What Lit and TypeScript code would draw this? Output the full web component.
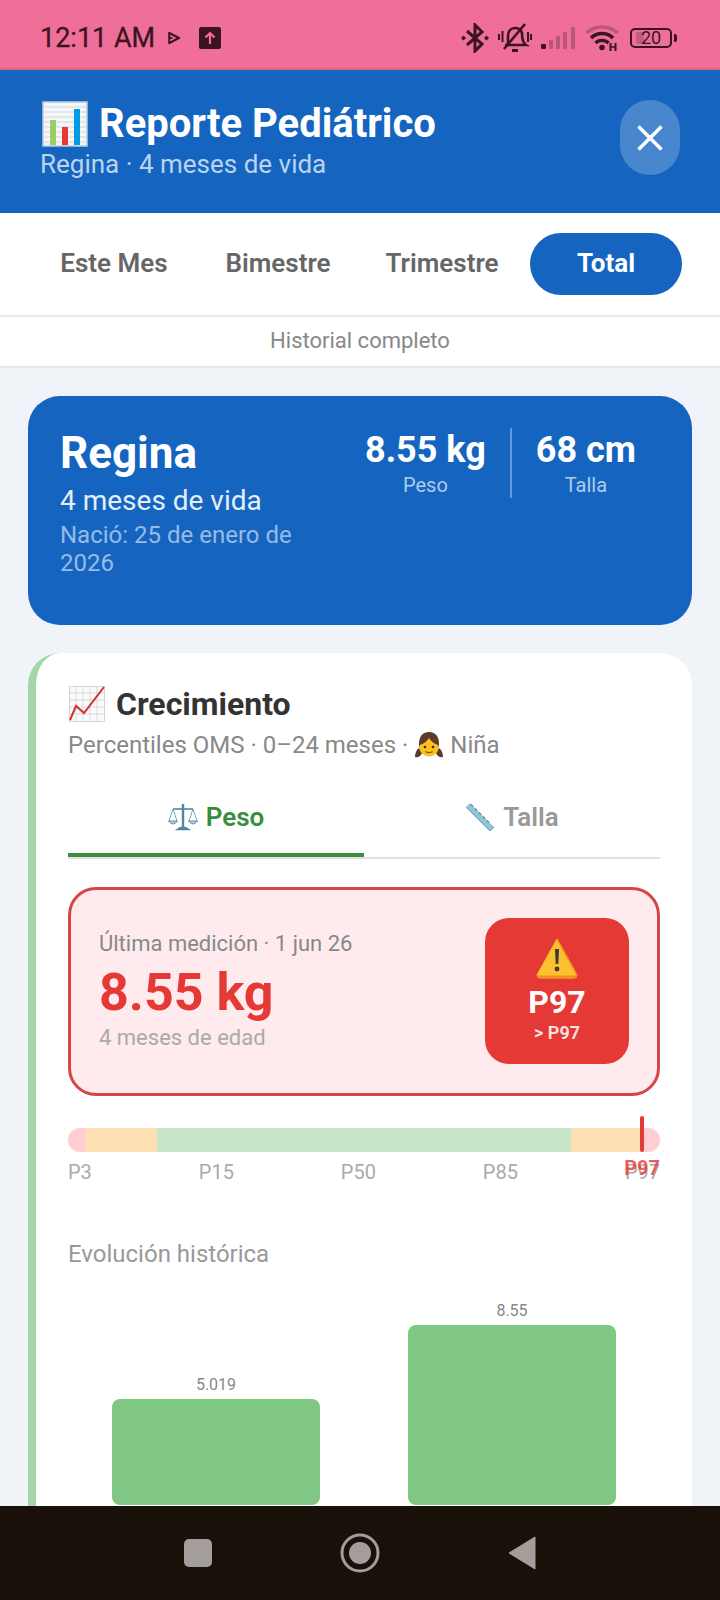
import { LitElement, html, css, svg } from 'lit';
import { customElement, state } from 'lit/decorators.js';

// Emoji have no installed font here, so they are drawn by hand
const barChart = html`<svg width="46" height="46" viewBox="0 0 46 46">
  <rect x="1" y="1" width="44" height="44" fill="#f4f6f8" stroke="#b8cbdc" stroke-width="1.5" />
  ${[6, 11, 16, 21, 26, 31, 36, 41].map(
    y => svg`<line x1="2" x2="44" y1=${y} y2=${y} stroke="#cfd6dc" stroke-width="1" />`,
  )}
  <rect x="8" y="19" width="6" height="25" fill="#9ccc65" />
  <rect x="20" y="26" width="6" height="18" fill="#e53935" />
  <rect x="32" y="8" width="6" height="36" fill="#039be5" />
</svg>`;

const chartUp = html`<svg width="36" height="36" viewBox="0 0 36 36">
  <rect x="0.5" y="0.5" width="35" height="35" fill="#fafafa" stroke="#d5d9dc" />
  ${[7, 14, 21, 28].map(
    v => svg`<path d="M${v} 0V36M0 ${v}H36" stroke="#d5d9dc" stroke-width="1" />`,
  )}
  <path d="M1 34L7 20L15 27L35 1" fill="none" stroke="#d32f2f" stroke-width="2" />
</svg>`;

const scales = html`<svg width="30" height="28" viewBox="0 0 30 28">
  <path d="M15 1V24" stroke="#4f87a3" stroke-width="2.4" />
  <path d="M9 26.5Q15 22 21 26.5Z" fill="#4f87a3" stroke="#4f87a3" stroke-width="1.5" />
  <path d="M5 6H25" stroke="#4f87a3" stroke-width="1.6" />
  <path d="M5 6L1 18M5 6L9 18M25 6L21 18M25 6L29 18" stroke="#6d9db5" stroke-width="0.9" fill="none" />
  <path d="M0.5 18H9.5Q5 24 0.5 18ZM20.5 18H29.5Q25 24 20.5 18Z" fill="#b9d3e0" stroke="#4f87a3" stroke-width="0.9" />
</svg>`;

const ruler = html`<svg width="30" height="30" viewBox="0 0 30 30">
  <path d="M5 1L29 25L25 29L1 5Z" fill="#90c4d6" />
  <path d="M1 5L25 29L29 25" fill="none" stroke="#5f9fb5" stroke-width="1" />
  <path d="M6 2.500L8 4.500M10 6.500L12 8.500M14 10.500L16 12.500M18 14.500L20 16.500M22 18.500L24 20.500" stroke="#5d8c9e" stroke-width="1.400" />
</svg>`;

const girl = html`<svg width="30" height="28" viewBox="0 0 30 28">
  <path d="M15 1C8 1 5 6 5 13C5 19 9 21 15 21C21 21 25 19 25 13C25 6 22 1 15 1Z" fill="#5d3a2e" />
  <path d="M5 17C2 19 1 23 1 26C4 27 7 25 8 22ZM25 17C28 19 29 23 29 26C26 27 23 25 22 22Z" fill="#5d3a2e" />
  <circle cx="15" cy="16" r="9.500" fill="#fcc21b" />
  <path d="M5.500 14C10 13 13 10 15 7C17 10 20 13 24.500 14C24 6 20 3 15 3C10 3 6 6 5.500 14Z" fill="#5d3a2e" />
  <circle cx="11" cy="16" r="1.300" fill="#3e2723" />
  <circle cx="19" cy="16" r="1.300" fill="#3e2723" />
  <path d="M11.500 20.500Q15 23 18.500 20.500" stroke="#8a4b25" stroke-width="1.200" fill="none" />
</svg>`;

const warning = html`<svg width="42" height="42" viewBox="0 0 42 42">
  <path d="M21 2L41 38Q41 41 38 41H4Q1 41 1 38Z" fill="#fdc02f" stroke="#fdc02f" stroke-linejoin="round" />
  <path d="M1 38Q1 41 4 41H38Q41 41 41 38Q41 39 38 39H4Q1 39 1 38Z" fill="#f19020" stroke="#f19020" />
  <path d="M21 2L41 38" stroke="#f19020" stroke-width="1.500" />
  <path d="M19 12H23L22.300 27H19.700Z" fill="#3a3a3a" />
  <circle cx="21" cy="32" r="2.400" fill="#3a3a3a" />
</svg>`;

const statusIcons = html`
  <svg width="28" height="30" viewBox="0 0 28 30" fill="none" stroke="#3b1424" stroke-width="3">
    <path d="M6 8L21 21L14 28V2L21 9L6 22" />
    <path d="M2.500 12.500L5 15L2.500 17.500L0 15ZM25.500 12.500L28 15L25.500 17.500L23 15Z" fill="#3b1424" stroke="none" />
  </svg>
  <svg width="34" height="30" viewBox="0 0 34 30" fill="none" stroke="#3b1424" stroke-width="2.600">
    <path d="M10 22V13C10 8 13 5 17 5C21 5 23 7 24 10C24 15 25 20 28 22H7" />
    <path d="M14 27.500H20" stroke-width="3" />
    <path d="M6 26L27 1" />
    <path d="M1 11V17M4.500 8V19M30 9V19M33 11V17" stroke-width="2" />
  </svg>
  <svg width="35" height="24" viewBox="0 0 35 24">
    <rect x="0" y="18" width="5" height="5" rx="1" fill="#3b1424" />
    <rect x="8" y="14" width="4" height="9" rx="1" fill="#b9567b" />
    <rect x="15" y="10" width="4" height="13" rx="1" fill="#b9567b" />
    <rect x="22" y="6" width="4" height="17" rx="1" fill="#b9567b" />
    <rect x="30" y="1" width="4" height="22" rx="1" fill="#b9567b" />
  </svg>
  <svg width="34" height="26" viewBox="0 0 34 26" fill="none">
    <path d="M1.500 8C10 0 24 0 32.500 8" stroke="#b9567b" stroke-width="3.600" />
    <path d="M6 13C12 7 22 7 28 13" stroke="#3b1424" stroke-width="3.600" />
    <path d="M10.500 18C14 14.500 20 14.500 23.500 18" stroke="#3b1424" stroke-width="3.400" />
    <circle cx="17" cy="22.500" r="2.800" fill="#3b1424" />
    <path d="M25.500 18V26M30.500 18V26" stroke="#3b1424" stroke-width="2" />
    <path d="M25 22H31" stroke="#3b1424" stroke-width="1.500" />
  </svg>
  <div class="st-battery">
    <div class="st-cell">
      <div class="st-charge"></div>
      <span>20</span>
    </div>
    <div class="st-tip"></div>
  </div>
`;

@customElement('app-root')
export class AppRoot extends LitElement {
  @state() private period = 'Total';

  private periods = ['Este Mes', 'Bimestre', 'Trimestre', 'Total'];
  private scale = ['P3', 'P15', 'P50', 'P85', 'P97'];
  // percent width and color of each band on the percentile track
  private bands = [
    { w: 3, c: '#ffcdd2' },
    { w: 12, c: '#ffe0b2' },
    { w: 70, c: '#c8e6c9' },
    { w: 12, c: '#ffe0b2' },
    { w: 3, c: '#ffcdd2' },
  ];
  private bars = [
    { label: '5.019', h: 106 },
    { label: '8.55', h: 180 },
  ];

  static styles = css`
    :host {
      display: flex;
      flex-direction: column;
      height: 1600px;
      overflow: hidden;
      font-family: Roboto, 'Liberation Sans', sans-serif;
      background: #f0f4f8;
    }
    .status {
      flex: none;
      border-bottom: 2px solid #d9648b;
      background: #ef6f98;
      display: flex;
      align-items: center;
      padding: 8px 43px 0 40px;
      height: 60px;
      color: #3b1424;
    }
    .time {
      font-size: 27px;
      font-weight: 400;
      margin-right: 12px;
      -webkit-text-stroke: 0.3px #3b1424;
    }
    .st-play {
      margin-right: 18px;
    }
    .st-right {
      margin-left: auto;
      display: flex;
      align-items: center;
      gap: 9px;
    }
    .st-battery {
      display: flex;
      align-items: center;
      gap: 2px;
      margin-left: 2px;
    }
    .st-cell {
      position: relative;
      width: 38px;
      height: 16px;
      border: 2px solid #3b1424;
      border-radius: 5px;
      display: flex;
      align-items: center;
      justify-content: center;
      font-size: 18px;
      line-height: 16px;
    }
    .st-cell span {
      position: relative;
    }
    .st-charge {
      position: absolute;
      left: 4px;
      top: 2px;
      bottom: 2px;
      width: 8px;
      border-radius: 2px;
      background: #c45c82;
    }
    .st-tip {
      width: 3px;
      height: 8px;
      background: #3b1424;
      border-radius: 0 2px 2px 0;
    }
    .header {
      flex: none;
      height: 143px;
      box-sizing: border-box;
      background: #1565c0;
      display: flex;
      align-items: center;
      justify-content: space-between;
      padding: 0 40px 1px;
      color: #fff;
    }
    .title {
      display: flex;
      align-items: center;
      gap: 11px;
      font-size: 40px;
      font-weight: 700;
      line-height: 44px;
    }
    .title svg {
      margin-left: 2px;
    }
    .subtitle {
      font-size: 26px;
      line-height: 34px;
      color: #bbd3ef;
    }
    .close {
      width: 60px;
      height: 75px;
      border-radius: 30px;
      background: rgba(255, 255, 255, 0.22);
      display: flex;
      align-items: center;
      justify-content: center;
      margin-bottom: 7px;
    }
    .periods {
      flex: none;
      height: 104px;
      box-sizing: border-box;
      background: #fff;
      border-bottom: 2px solid #e8e8e8;
      display: flex;
      align-items: center;
      gap: 12px;
      padding: 0 38px;
    }
    .period {
      flex: 1;
      height: 62px;
      box-sizing: border-box;
      padding-bottom: 2px;
      border-radius: 31px;
      display: flex;
      align-items: center;
      justify-content: center;
      font-size: 26px;
      font-weight: 600;
      color: #666;
    }
    .period.on {
      background: #1565c0;
      color: #fff;
      font-weight: 700;
    }
    .range {
      flex: none;
      height: 51px;
      box-sizing: border-box;
      padding-bottom: 2px;
      background: #fff;
      border-bottom: 2px solid #e8e8e8;
      display: flex;
      align-items: center;
      justify-content: center;
      font-size: 22px;
      color: #888;
    }
    .scroll {
      flex: 1;
      min-height: 0;
      overflow: hidden;
      padding: 28px 28px 0;
    }
    .hero {
      height: 229px;
      box-sizing: border-box;
      background: #1565c0;
      border-radius: 32px;
      padding: 28px 32px;
      display: flex;
      justify-content: space-between;
      color: #fff;
    }
    .hero-name {
      font-size: 44px;
      font-weight: 700;
      line-height: 58px;
    }
    .hero-age {
      font-size: 28px;
      line-height: 36px;
      padding-top: 1px;
      color: #e4eef9;
    }
    .hero-born {
      width: 270px;
      font-size: 24px;
      line-height: 28px;
      color: #95bbe6;
      margin-top: 2px;
    }
    .hero-stats {
      display: flex;
      align-items: flex-start;
      margin-top: 4px;
    }
    .stat {
      text-align: center;
      padding: 0 24px;
    }
    .stat + .stat {
      border-left: 2px solid rgba(255, 255, 255, 0.35);
    }
    .stat b {
      display: block;
      font-size: 36px;
      line-height: 44px;
    }
    .stat span {
      font-size: 20px;
      line-height: 26px;
      color: #b0cbea;
    }
    .card {
      margin-top: 28px;
      background: #fff;
      border-left: 8px solid #a5d6a7;
      border-radius: 32px;
      padding: 31px 32px 40px;
    }
    .card-title {
      display: flex;
      align-items: center;
      gap: 11px;
      font-size: 32px;
      font-weight: 700;
      color: #333;
      line-height: 40px;
    }
    .card-title svg {
      margin-left: 1px;
    }
    .card-sub {
      display: flex;
      align-items: center;
      gap: 6px;
      font-size: 24px;
      line-height: 34px;
      color: #888;
      margin-top: 4px;
    }
    .tabs {
      display: flex;
      margin-top: 21px;
      border-bottom: 2px solid #e0e0e0;
    }
    .tab {
      flex: 1;
      height: 70px;
      box-sizing: content-box;
      padding-bottom: 0;
      display: flex;
      align-items: center;
      justify-content: center;
      gap: 8px;
      font-size: 26px;
      font-weight: 600;
      color: #999;
      border-bottom: 4px solid transparent;
    }
    .tab-label {
      display: flex;
      align-items: center;
      gap: 8px;
      margin-bottom: 3px;
    }
    .tab.on {
      color: #388e3c;
      border-bottom-color: #388e3c;
    }
    .latest {
      margin-top: 28px;
      height: 209px;
      box-sizing: border-box;
      background: #ffebee;
      border: 3px solid #d64545;
      border-radius: 28px;
      padding: 0 28px;
      display: flex;
      align-items: center;
      justify-content: space-between;
    }
    .latest-text {
      padding-bottom: 2px;
    }
    .latest-label {
      font-size: 22px;
      line-height: 30px;
      color: #888;
    }
    .latest-value {
      font-size: 52px;
      font-weight: 700;
      line-height: 63px;
      padding-top: 2px;
      color: #e53935;
    }
    .latest-age {
      font-size: 22px;
      line-height: 30px;
      color: #aaa;
      margin-top: -1px;
    }
    .badge {
      width: 144px;
      height: 146px;
      margin-bottom: 1px;
      background: #e53935;
      border-radius: 24px;
      color: #fff;
      display: flex;
      flex-direction: column;
      align-items: center;
      justify-content: center;
    }
    .badge b {
      font-size: 32px;
      line-height: 38px;
      margin-top: 4px;
    }
    .badge span {
      font-size: 18px;
      font-weight: 600;
      line-height: 24px;
      color: #ffe3e6;
    }
    .track-wrap {
      position: relative;
      margin-top: 32px;
    }
    .track {
      height: 24px;
      border-radius: 12px;
      overflow: hidden;
      display: flex;
    }
    .marker {
      position: absolute;
      left: 572px;
      top: -12px;
      width: 4px;
      height: 36px;
      border-radius: 2px;
      background: #e53935;
    }
    .marker-label {
      position: absolute;
      right: 0;
      top: 26px;
      font-size: 20px;
      font-weight: 700;
      line-height: 28px;
      color: #e53935;
      opacity: 0.8;
    }
    .scale {
      display: flex;
      justify-content: space-between;
      margin-top: 6px;
      font-size: 20px;
      line-height: 28px;
      color: #aaa;
    }
    .evo {
      margin-top: 53px;
      font-size: 24px;
      line-height: 30px;
      color: #999;
    }
    .chart {
      margin-top: 7px;
      height: 229px;
      display: flex;
      align-items: flex-end;
      justify-content: space-around;
    }
    .col {
      width: 208px;
      display: flex;
      flex-direction: column;
      align-items: center;
      font-size: 16px;
      line-height: 24px;
      color: #888;
    }
    .bar {
      width: 100%;
      margin-top: 2px;
      background: #81c784;
      border-radius: 8px;
    }
    .nav {
      flex: none;
      height: 94px;
      background: #1a100a;
      display: flex;
      align-items: center;
      justify-content: center;
    }
    .nav-btn {
      width: 162px;
      display: flex;
      justify-content: center;
    }
  `;

  render() {
    return html`
      <div class="status">
        <span class="time">12:11 AM</span>
        <svg class="st-play" width="14" height="14" viewBox="0 0 14 14">
          <path d="M2 1.500L12.500 7L2 12.500Z" fill="#3b1424" stroke="#3b1424" stroke-width="1.500" stroke-linejoin="round" />
          <path d="M3 4.500L8 7L3 9.500" fill="none" stroke="#ef6f98" stroke-width="1.400" />
        </svg>
        <svg width="22" height="22" viewBox="0 0 22 22">
          <rect width="22" height="22" rx="2" fill="#3b1424" />
          <path d="M11 17V6M6.500 10.500L11 6L15.500 10.500" fill="none" stroke="#ef6f98" stroke-width="2.200" />
        </svg>
        <div class="st-right">${statusIcons}</div>
      </div>

      <div class="header">
        <div>
          <div class="title">${barChart}<span>Reporte Pediátrico</span></div>
          <div class="subtitle">Regina · 4 meses de vida</div>
        </div>
        <div class="close">
          <svg width="26" height="26" viewBox="0 0 26 26">
            <path d="M1.500 1.500L24.500 24.500M24.500 1.500L1.500 24.500" stroke="#fff" stroke-width="3.500" />
          </svg>
        </div>
      </div>

      <div class="periods">
        ${this.periods.map(
          p => html`<div class="period ${p === this.period ? 'on' : ''}">${p}</div>`,
        )}
      </div>
      <div class="range">Historial completo</div>

      <div class="scroll">
        <div class="hero">
          <div>
            <div class="hero-name">Regina</div>
            <div class="hero-age">4 meses de vida</div>
            <div class="hero-born">Nació: 25 de enero de 2026</div>
          </div>
          <div class="hero-stats">
            <div class="stat"><b>8.55 kg</b><span>Peso</span></div>
            <div class="stat"><b>68 cm</b><span>Talla</span></div>
          </div>
        </div>

        <div class="card">
          <div class="card-title">${chartUp}<span>Crecimiento</span></div>
          <div class="card-sub">Percentiles OMS · 0–24 meses · ${girl} Niña</div>

          <div class="tabs">
            <div class="tab on"><div class="tab-label">${scales}Peso</div></div>
            <div class="tab"><div class="tab-label">${ruler}Talla</div></div>
          </div>

          <div class="latest">
            <div class="latest-text">
              <div class="latest-label">Última medición · 1 jun 26</div>
              <div class="latest-value">8.55 kg</div>
              <div class="latest-age">4 meses de edad</div>
            </div>
            <div class="badge">
              ${warning}
              <b>P97</b>
              <span>&gt; P97</span>
            </div>
          </div>

          <div class="track-wrap">
            <div class="track">
              ${this.bands.map(
                b => html`<div style="width:${b.w}%;background:${b.c}"></div>`,
              )}
            </div>
            <div class="scale">${this.scale.map(s => html`<span>${s}</span>`)}</div>
            <div class="marker"></div>
            <div class="marker-label">P97</div>
          </div>

          <div class="evo">Evolución histórica</div>
          <div class="chart">
            ${this.bars.map(
              b => html`<div class="col">
                <span>${b.label}</span>
                <div class="bar" style="height:${b.h}px"></div>
              </div>`,
            )}
          </div>
        </div>
      </div>

      <div class="nav">
        <div class="nav-btn">
          <svg width="30" height="30" viewBox="0 0 30 30"><rect width="28" height="28" x="1" y="1" rx="5" fill="#a39e9b" /></svg>
        </div>
        <div class="nav-btn">
          <svg width="40" height="40" viewBox="0 0 40 40">
            <circle cx="20" cy="20" r="18" fill="none" stroke="#a39e9b" stroke-width="3" />
            <circle cx="20" cy="20" r="11" fill="#a39e9b" />
          </svg>
        </div>
        <div class="nav-btn">
          <svg width="28" height="34" viewBox="0 0 28 34"><path d="M27 1V33L1 17Z" fill="#a39e9b" stroke="#a39e9b" stroke-linejoin="round" /></svg>
        </div>
      </div>
    `;
  }
}
